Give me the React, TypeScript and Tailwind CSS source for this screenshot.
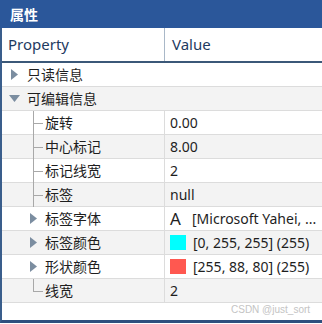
import React from 'react';

type Row = {
  label: string;
  kind: 'group' | 'sub' | 'leaf';
  open?: boolean;
  last?: boolean;
  value?: React.ReactNode;
};

const ROWS: Row[] = [
  { label: '只读信息', kind: 'group', open: false },
  { label: '可编辑信息', kind: 'group', open: true },
  { label: '旋转', kind: 'leaf', value: '0.00' },
  { label: '中心标记', kind: 'leaf', value: '8.00' },
  { label: '标记线宽', kind: 'leaf', value: '2' },
  { label: '标签', kind: 'leaf', value: 'null' },
  {
    label: '标签字体',
    kind: 'sub',
    value: (
      <>
        <span className="w-[22px] text-[17px] leading-none">A</span>
        <span>[Microsoft Yahei, ...</span>
      </>
    ),
  },
  {
    label: '标签颜色',
    kind: 'sub',
    value: (
      <>
        <span className="w-[16px] h-[15px] bg-[#00FFFF] mr-[7px]" />
        <span>[0, 255, 255] (255)</span>
      </>
    ),
  },
  {
    label: '形状颜色',
    kind: 'sub',
    value: (
      <>
        <span className="w-[16px] h-[15px] bg-[#FF5850] mr-[7px]" />
        <span>[255, 88, 80] (255)</span>
      </>
    ),
  },
  { label: '线宽', kind: 'leaf', last: true, value: '2' },
];

function ArrowRight() {
  return (
    <svg width="7" height="11" viewBox="0 0 7 11">
      <path d="M0 0 L7 5.5 L0 11 Z" fill="#7B8DA0" />
    </svg>
  );
}

function ArrowDown() {
  return (
    <svg width="11" height="7" viewBox="0 0 11 7">
      <path d="M0 0 L11 0 L5.5 7 Z" fill="#7B8DA0" />
    </svg>
  );
}

export default function App() {
  return (
    <div className="w-[322px] h-[324px] overflow-hidden bg-white relative font-['Noto_Sans','Noto_Sans_CJK_SC',sans-serif] text-[#1E1E1E]">
      {/* 标题栏 */}
      <div className="h-[28px] bg-[#2B579A] text-white font-bold text-[14px] pl-[10px] flex items-center">
        属性
      </div>

      <div className="border-l-2 border-[#3A5E8C] border-b-[3px] border-b-[#2F4F7E]">
        {/* 表头 */}
        <div className="h-[35px] flex border-b-2 border-[#3B5878] text-[15px] text-[#1E3A5F]">
          <div className="w-[163px] border-r border-[#A9B8C8] pl-[6px] flex items-center">Property</div>
          <div className="flex-1 pl-[7px] flex items-center">Value</div>
        </div>

        {ROWS.map((row, i) => (
          <div
            key={row.label}
            className={`h-[24px] flex border-b border-[#DCDCDC] text-[14px] ${i % 2 === 1 ? 'bg-[#F3F3F3]' : 'bg-white'}`}
          >
            {row.kind === 'group' ? (
              <div className="flex-1 flex items-center">
                <div className="w-[25px] flex items-center justify-center">
                  {row.open ? <ArrowDown /> : <ArrowRight />}
                </div>
                <span>{row.label}</span>
              </div>
            ) : (
              <>
                <div className="w-[163px] border-r border-[#DCDCDC] flex items-center relative">
                  {row.kind === 'leaf' ? (
                    <>
                      <div
                        className={`absolute left-[31px] top-0 w-px bg-[#A8A8A8] ${row.last ? 'h-[12px]' : 'h-[24px]'}`}
                      />
                      <div className="absolute left-[31px] top-[12px] w-[10px] h-px bg-[#A8A8A8]" />
                    </>
                  ) : (
                    <div className="absolute left-[28px] top-[6px]">
                      <ArrowRight />
                    </div>
                  )}
                  <span className="pl-[43px]">{row.label}</span>
                </div>
                <div className="flex-1 pl-[5px] flex items-center whitespace-nowrap overflow-hidden">
                  {row.value}
                </div>
              </>
            )}
          </div>
        ))}

        <div className="h-[17px]" />
      </div>

      <div className="absolute left-[231px] top-[302px] text-[10px] text-[#C4C4C4] font-['Liberation_Sans',sans-serif]">
        CSDN @just_sort
      </div>
    </div>
  );
}
